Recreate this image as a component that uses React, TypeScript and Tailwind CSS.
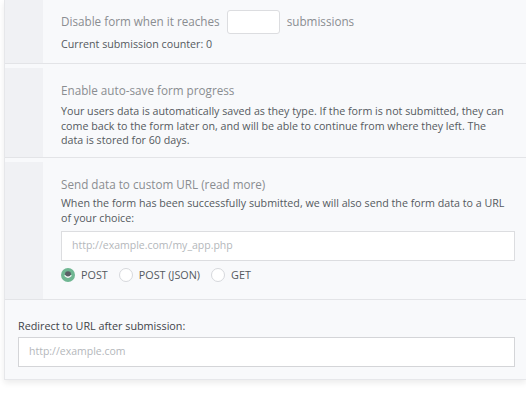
import React from "react";

const font = { fontFamily: '"Open Sans", "Liberation Sans", sans-serif' };

function Radio({ checked, label }: { checked?: boolean; label: string }) {
  return (
    <label className="flex items-center gap-[6px]">
      {checked ? (
        <span className="w-[14px] h-[14px] rounded-full bg-[#6fb692] flex items-center justify-center">
          <svg width="14" height="14" viewBox="0 0 14 14">
            <circle cx="7" cy="6.2" r="3" fill="#5a5f66" />
            <path d="M3.6 7.4 Q7 11.2 10.4 7.4" stroke="#ffffff" strokeWidth="1.4" fill="none" />
          </svg>
        </span>
      ) : (
        <span className="w-[14px] h-[14px] rounded-full border border-[#d6d8dc] bg-white" />
      )}
      <span className="text-[10.8px] leading-[14px] text-[#555a60]">{label}</span>
    </label>
  );
}

export default function App() {
  return (
    <div className="w-[526px] h-[409px] bg-white overflow-hidden" style={font}>
      <div className="ml-[4px] border-l border-[#dfe0e3] bg-[#f8f9fb] shadow-[0_3px_6px_rgba(0,0,0,0.08)] border-b border-[#e6e7ea]">
        {/* Section 1 */}
        <div className="flex h-[64px] border-b border-[#e3e4e7]">
          <div className="w-[38px] shrink-0 bg-[#f0f1f4]" />
          <div className="flex-1 pl-[18px] pt-[10px]">
            <div className="flex items-center text-[11.7px] text-[#8a8d91] h-[24px]">
              <span>Disable form when it reaches</span>
              <span className="mx-[7px] w-[53px] h-[24px] bg-white border border-[#dcdde0] rounded-[3px]" />
              <span>submissions</span>
            </div>
            <div className="mt-[3px] text-[10.7px] leading-[15px] text-[#555a60]">Current submission counter: 0</div>
          </div>
        </div>
        {/* Section 2 */}
        <div className="flex h-[94px] border-b border-[#e3e4e7]">
          <div className="w-[38px] shrink-0 mt-[4px] bg-[#f0f1f4]" />
          <div className="flex-1 pl-[18px] pr-[17px] pt-[18px]">
            <div className="text-[11.7px] text-[#8a8d91] leading-[16px]">Enable auto-save form progress</div>
            <div className="mt-[6px] text-[10.7px] leading-[14.5px] text-[#555a60]">
              Your users data is automatically saved as they type. If the form is not submitted, they can come back to the form later on, and will be able to continue from where they left. The data is stored for 60 days.
            </div>
          </div>
        </div>
        {/* Section 3 */}
        <div className="flex h-[142px] border-b border-[#e3e4e7]">
          <div className="w-[38px] shrink-0 mt-[4px] bg-[#f0f1f4]" />
          <div className="flex-1 pl-[18px] pr-[11px] pt-[18px]">
            <div className="text-[11.7px] text-[#8a8d91] leading-[16px]">Send data to custom URL (read more)</div>
            <div className="mt-[4px] text-[10.7px] leading-[14.5px] text-[#555a60]">
              When the form has been successfully submitted, we will also send the form data to a URL of your choice:
            </div>
            <div className="mt-[6px] h-[30px] bg-white border border-[#dcdde0] flex items-center pl-[10px] text-[10.5px] text-[#b4b7bb]">
              http://example.com/my_app.php
            </div>
            <div className="mt-[7px] flex items-center gap-[11px]">
              <Radio checked label="POST" />
              <Radio label="POST (JSON)" />
              <Radio label="GET" />
            </div>
          </div>
        </div>
        {/* Bottom */}
        <div className="pl-[13px] pr-[11px] pt-[18px] pb-[12px]">
          <div className="text-[10.8px] text-[#3f4348] leading-[16px]">Redirect to URL after submission:</div>
          <div className="mt-[3px] h-[30px] bg-white border border-[#d4d5d8] flex items-center pl-[10px] text-[10.5px] text-[#b4b7bb]">
            http://example.com
          </div>
        </div>
      </div>
    </div>
  );
}
